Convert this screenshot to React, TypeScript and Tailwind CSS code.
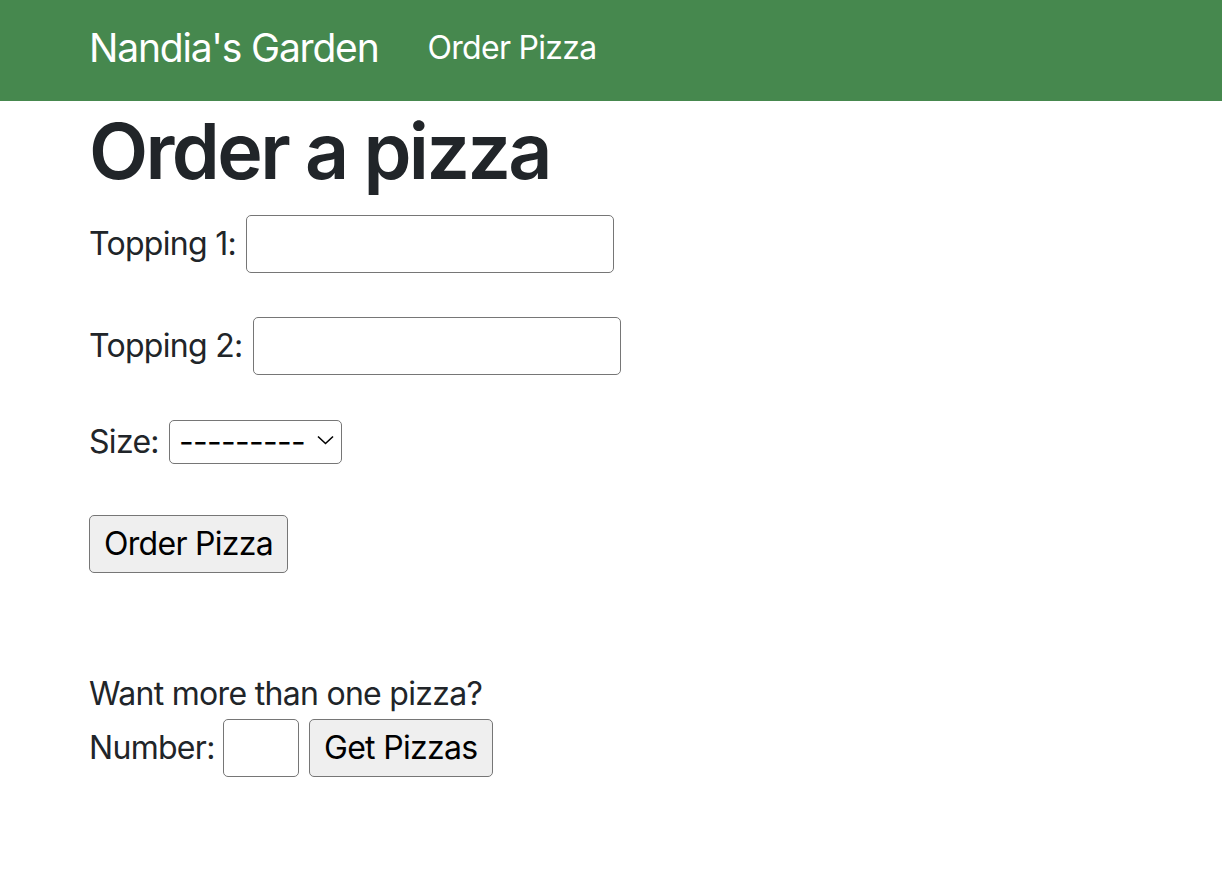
import React from 'react';

const App: React.FC = () => {
  return (
    <div className="min-h-[894px] bg-white text-[#212529] font-['Inter','Helvetica',sans-serif] text-[32px] leading-[48px] tracking-[-0.7px]">
      <nav className="h-[101px] bg-[#46884e] flex items-center pl-[89px] pb-[6px]">
        <a href="#" className="text-white text-[39px] leading-[60px] tracking-[-1.2px] mr-[49px]">
          Nandia's Garden
        </a>
        <a href="#" className="text-white text-[32px] leading-[48px]">
          Order Pizza
        </a>
      </nav>

      <main className="pl-[89px]">
        <h1 className="text-[77px] leading-[96px] font-semibold tracking-[-2.6px] mt-[2px]">Order a pizza</h1>

        <form className="flex flex-col items-start mt-[16px]">
          <div className="h-[58px] flex items-center gap-[10px]">
            <label htmlFor="t1">Topping 1:</label>
            <input id="t1" type="text" className="w-[368px] h-[58px] border border-[#767676] rounded-[5px] bg-white" />
          </div>

          <div className="h-[58px] flex items-center gap-[10px] mt-[44px]">
            <label htmlFor="t2">Topping 2:</label>
            <input id="t2" type="text" className="w-[368px] h-[58px] border border-[#767676] rounded-[5px] bg-white" />
          </div>

          <div className="h-[44px] flex items-center gap-[10px] mt-[45px]">
            <label htmlFor="size">Size:</label>
            <div className="relative">
              <select
                id="size"
                className="appearance-none w-[173px] h-[44px] border border-[#767676] rounded-[5px] bg-white pl-[9px] text-black text-[32px] leading-[40px] tracking-[-0.7px]"
              >
                <option>---------</option>
              </select>
              <svg
                className="absolute right-[8px] top-[17px] pointer-events-none"
                width="17"
                height="10"
                viewBox="0 0 17 10"
                fill="none"
                stroke="#000"
                strokeWidth="1.6"
              >
                <path d="M1 1.5l7.5 7 7.5-7" />
              </svg>
            </div>
          </div>

          <button
            type="button"
            className="mt-[51px] w-[199px] h-[58px] border border-[#767676] rounded-[5px] bg-[#efefef] text-black"
          >
            Order Pizza
          </button>
        </form>

        <p className="mt-[97px]">Want more than one pizza?</p>
        <div className="h-[58px] flex items-center mt-[1px]">
          <label htmlFor="num">Number:</label>
          <input id="num" type="number" className="ml-[8px] w-[76px] h-[58px] border border-[#767676] rounded-[5px] bg-white" />
          <button
            type="button"
            className="ml-[10px] w-[184px] h-[58px] border border-[#767676] rounded-[5px] bg-[#efefef] text-black"
          >
            Get Pizzas
          </button>
        </div>
      </main>
    </div>
  );
};

export default App;
